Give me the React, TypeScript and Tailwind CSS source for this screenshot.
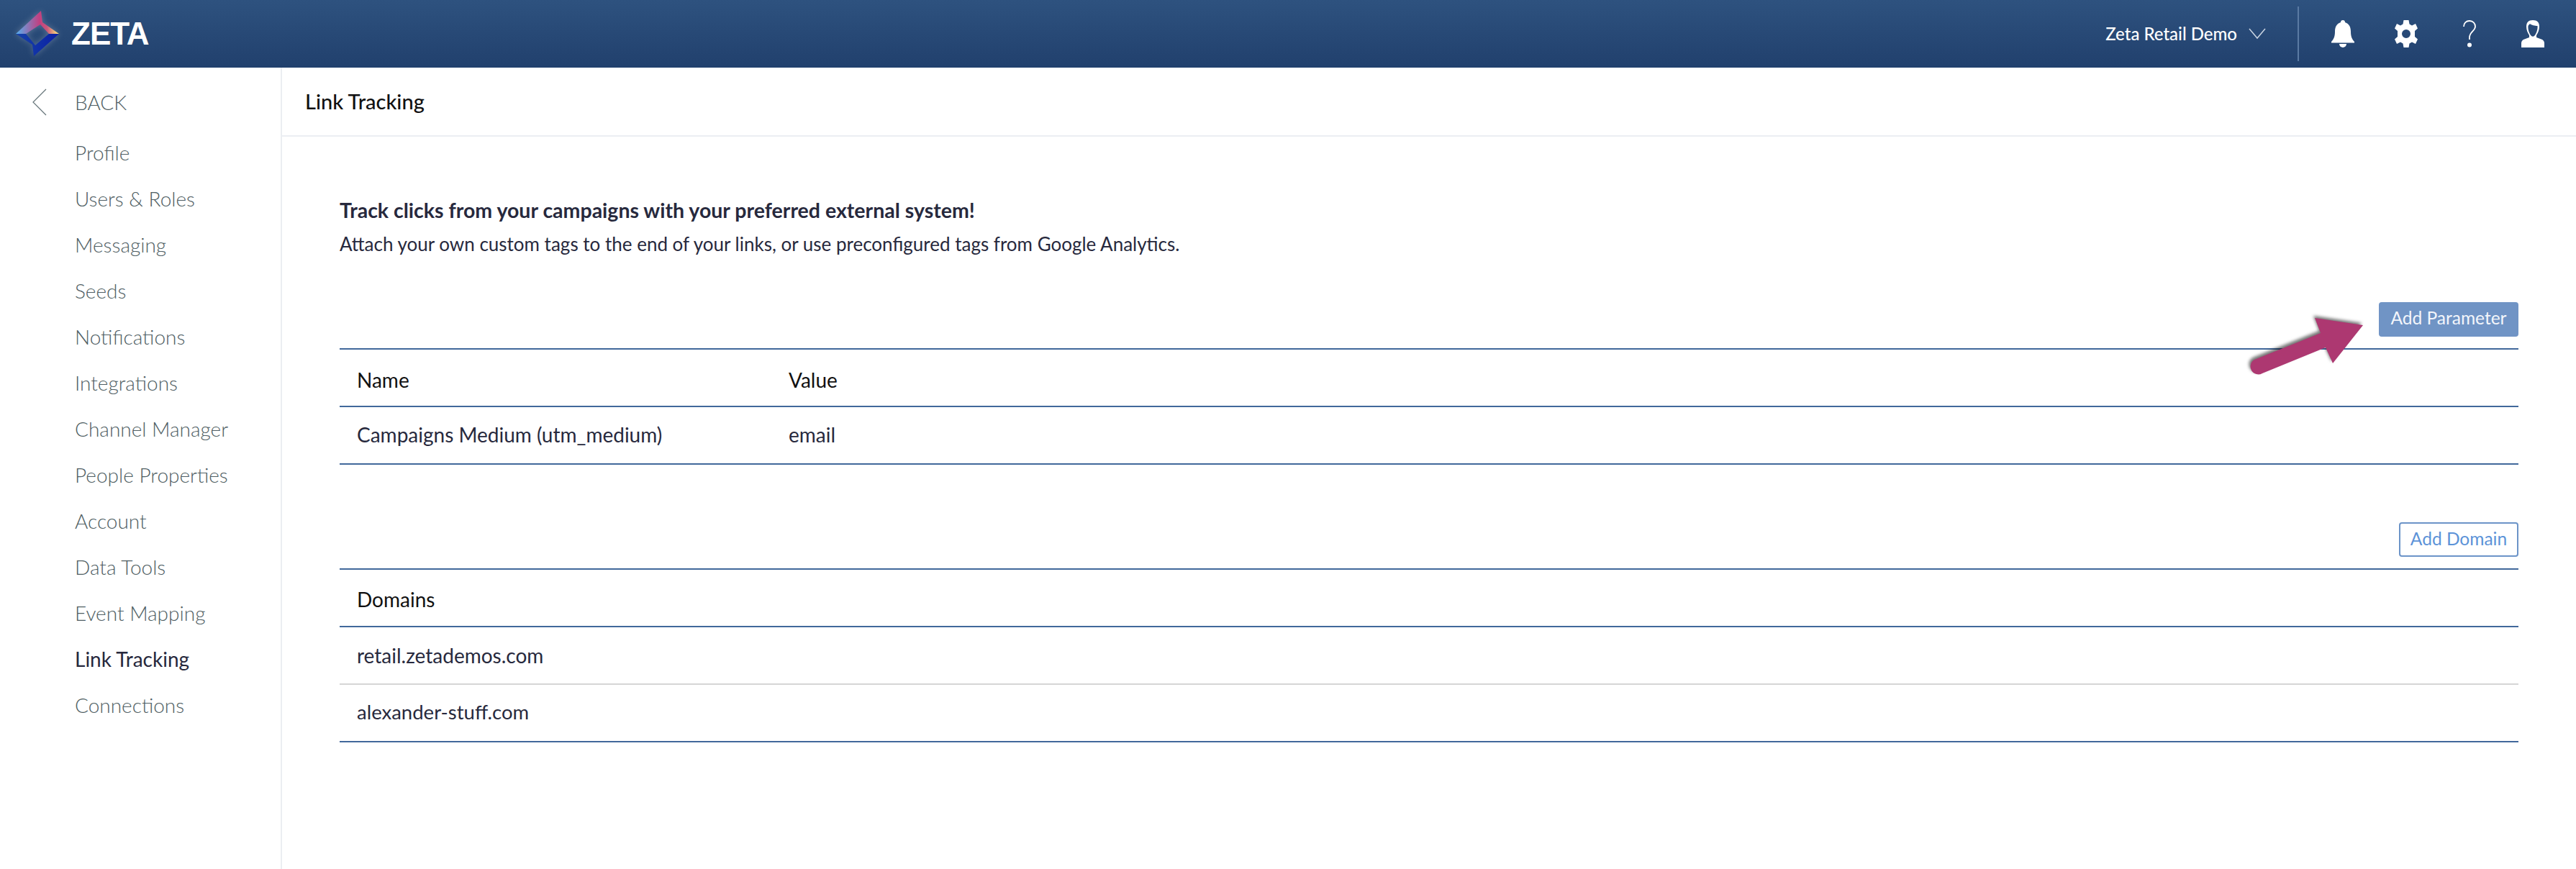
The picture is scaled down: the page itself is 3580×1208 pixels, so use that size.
const navItems = [
  "Profile",
  "Users & Roles",
  "Messaging",
  "Seeds",
  "Notifications",
  "Integrations",
  "Channel Manager",
  "People Properties",
  "Account",
  "Data Tools",
  "Event Mapping",
  "Link Tracking",
  "Connections",
];

function Logo() {
  return (
    <svg width="60" height="64" viewBox="22 14 60 64" className="shrink-0 drop-shadow-[0_0_4px_rgba(255,255,255,0.25)]">
      <defs>
        <linearGradient id="logoTop" x1="0" y1="0" x2="1" y2="0">
          <stop offset="0" stopColor="#54b0f0" />
          <stop offset="0.55" stopColor="#c23f80" />
          <stop offset="0.72" stopColor="#c8567c" />
          <stop offset="1" stopColor="#fff07a" />
        </linearGradient>
        <linearGradient id="logoBottom" x1="0" y1="0" x2="1" y2="0">
          <stop offset="0" stopColor="#1743a8" />
          <stop offset="1" stopColor="#0a1fa6" />
        </linearGradient>
      </defs>
      <path d="M22 46 L57 14 L59 30 L82 46 L68 46 L56 33 L36 46 Z" fill="url(#logoTop)" />
      <path d="M22 46 L36 46 L49 62 L68 46 L82 46 L47 77 L45 61 Z" fill="url(#logoBottom)" />
    </svg>
  );
}

function BellIcon() {
  return (
    <svg width="32" height="38" viewBox="0 0 32 38" fill="white">
      <path d="M16 0 a3 3 0 0 1 3 3 C25 5 27 10 27 16 C27 23 29 27 32 30 L32 31.5 L0 31.5 L0 30 C3 27 5 23 5 16 C5 10 7 5 13 3 a3 3 0 0 1 3 -3 Z" />
      <path d="M11 33 L21 33 A5 5 0 0 1 11 33 Z" />
    </svg>
  );
}

function GearIcon() {
  return (
    <svg width="32" height="38" viewBox="0 0 32 38" fill="white">
      <path
        fillRule="evenodd"
        d="M12.5 0 H19.5 L20.5 5.5 L24 7.5 L29 5 L32 11.5 L28 15 V23 L32 26.5 L29 33 L24 30.5 L20.5 32.5 L19.5 38 H12.5 L11.5 32.5 L8 30.5 L3 33 L0 26.5 L4 23 V15 L0 11.5 L3 5 L8 7.5 L11.5 5.5 Z M16 13 A6 6 0 1 0 16 25 A6 6 0 1 0 16 13 Z"
      />
    </svg>
  );
}

function HelpIcon() {
  return (
    <svg width="20" height="38" viewBox="0 0 20 38" fill="none">
      <path d="M2 9 C2 4 5.500 1 10 1 C15 1 18 4.500 18 9 C18 15 10 16 10 24 V27" stroke="white" strokeWidth="1.800" />
      <circle cx="10" cy="34.500" r="3" fill="white" />
    </svg>
  );
}

function PersonIcon() {
  return (
    <svg width="32" height="38" viewBox="0 0 32 38" fill="white">
      <path
        fillRule="evenodd"
        d="M16 0 C22 0 25 3 25 9 C25 14 23 18 21 21 V24 L29 27 C31 28 32 30 32 32 V38 H0 V32 C0 30 1 28 3 27 L11 24 V21 C9 18 7 14 7 9 C7 3 10 0 16 0 Z M9.500 8 C9 13 11 19 14 22 C15 23 17 23 18 22 C21 19 23 13 22.500 8 C19 8 14 7 12 5 C11 6 10 7 9.500 8 Z"
      />
    </svg>
  );
}

function Arrow() {
  return (
    <svg
      width="180"
      height="100"
      viewBox="0 0 180 100"
      className="absolute left-[3124px] top-[430px] drop-shadow-[-2px_-3px_2px_rgba(0,0,0,0.55)]"
    >
      <path d="M160 22 L93 12 L101 33 L9 70 A10 10 0 0 0 20 89 L108 53 L118 75 Z" fill="#ad3871" />
    </svg>
  );
}

export default function App() {
  return (
    <div className="relative flex h-[1208px] w-[3580px] flex-col overflow-hidden bg-white font-['Lato',sans-serif]">
      {/* top bar */}
      <header className="flex h-[94px] shrink-0 items-center bg-gradient-to-b from-[#2e527f] to-[#21406d] pl-[22px] pr-[44px] text-white">
        <Logo />
        <span className="ml-[17px] font-['Liberation_Sans',sans-serif] text-[44px] leading-none font-bold tracking-[-1px]">ZETA</span>
        <div className="ml-auto flex items-center">
          <span className="text-[24px] font-medium">Zeta Retail Demo</span>
          <svg width="24" height="16" viewBox="0 0 24 16" className="ml-[16px]" fill="none">
            <path d="M1 1 L12 14 L23 1" stroke="#c9d4e2" strokeWidth="1.500" />
          </svg>
          <div className="ml-[44px] h-[76px] w-[2px] bg-[#5a7aa3]" />
          <div className="ml-[45px] flex items-center gap-[56px]">
            <BellIcon />
            <GearIcon />
            <div className="flex w-[32px] justify-center">
              <HelpIcon />
            </div>
            <PersonIcon />
          </div>
        </div>
      </header>

      <div className="flex min-h-0 flex-1">
        {/* sidebar */}
        <aside className="w-[392px] shrink-0 border-r-2 border-[#ebeef2] pt-[16px]">
          <div className="flex h-[64px] items-center pl-[45px] font-light text-[#4f5e63]">
            <svg width="20" height="38" viewBox="0 0 20 38" fill="none">
              <path d="M19 1 L1 19 L19 37" stroke="#66757a" strokeWidth="1.200" />
            </svg>
            <span className="ml-[39px] text-[28px]">BACK</span>
          </div>
          <nav className="mt-[6px] flex flex-col">
            {navItems.map((item) => (
              <a
                key={item}
                className={`flex h-[64px] items-center pl-[104px] text-[28px] ${
                  item === "Link Tracking" ? "text-[#27293d]" : "font-light text-[#4f5e63]"
                }`}
              >
                {item}
              </a>
            ))}
          </nav>
        </aside>

        {/* main */}
        <main className="min-w-0 flex-1">
          <div className="flex h-[96px] items-center border-b-2 border-[#ebeef2] pl-[32px] text-[29px] font-medium text-[#111]">
            Link Tracking
          </div>
          <div className="px-[80px] pt-[84px]">
            <h2 className="text-[28.5px] leading-[36px] font-bold text-[#27293d]">Track clicks from your campaigns with your preferred external system!</h2>
            <p className="mt-[11px] text-[26px] leading-[36px] text-[#27293d]">
              Attach your own custom tags to the end of your links, or use preconfigured tags from Google Analytics.
            </p>

            <div className="mt-[63px] flex justify-end">
              <button className="h-[48px] w-[194px] rounded-[4px] bg-[#7094c5] pb-[4px] text-[24.5px] text-[#f3f6fb]">Add Parameter</button>
            </div>
            <div className="mt-[16px] border-t-2 border-[#41689b]">
              <div className="flex h-[80px] items-center border-b-2 border-[#41689b] pt-[6px] pl-[24px] text-[28px] text-[#111]">
                <span className="w-[600px]">Name</span>
                <span>Value</span>
              </div>
              <div className="flex h-[80px] items-center border-b-2 border-[#41689b] pb-[2px] pl-[24px] text-[28px] text-[#27293d]">
                <span className="w-[600px]">Campaigns Medium (utm_medium)</span>
                <span>email</span>
              </div>
            </div>

            <div className="mt-[80px] flex justify-end">
              <button className="h-[48px] w-[166px] rounded-[4px] border-2 border-[#6c94c8] pb-[2px] text-[24.5px] text-[#5c93d8]">Add Domain</button>
            </div>
            <div className="mt-[16px] border-t-2 border-[#41689b]">
              <div className="flex h-[80px] items-center border-b-2 border-[#41689b] pt-[4px] pl-[24px] text-[28px] text-[#111]">Domains</div>
              <div className="flex h-[80px] items-center border-b-2 border-[#d5d5d5] pl-[24px] text-[28px] text-[#27293d]">retail.zetademos.com</div>
              <div className="flex h-[80px] items-center border-b-2 border-[#41689b] pb-[2px] pl-[24px] text-[27.5px] text-[#27293d]">alexander-stuff.com</div>
            </div>
          </div>
        </main>
      </div>

      <Arrow />
    </div>
  );
}
